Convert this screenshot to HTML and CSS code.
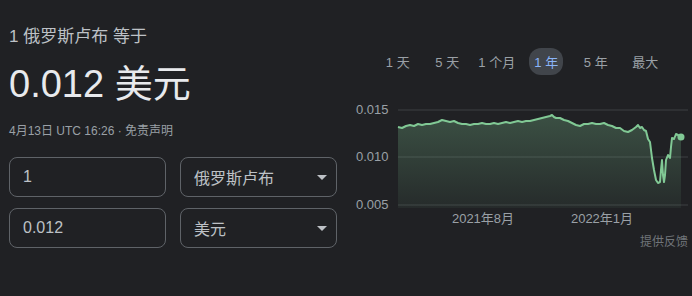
FILE: index.html
```html
<!DOCTYPE html>
<html lang="zh-CN">
<head>
  <meta charset="UTF-8">
  <meta name="viewport" content="width=device-width,initial-scale=1.0">
  <title>货币换算</title>
  <link rel="stylesheet" href="styles.css">
</head>
<body>
  <div class="converter">
    <!-- left: result + inputs -->
    <div class="left">
      <div class="title">1 俄罗斯卢布 等于</div>
      <div class="value">0.012 美元</div>
      <div class="meta">4月13日 UTC 16:26 · 免责声明</div>

      <div class="form">
        <div class="box">1</div>
        <div class="box select">俄罗斯卢布<span class="caret"></span></div>
        <div class="box">0.012</div>
        <div class="box select">美元<span class="caret"></span></div>
      </div>
    </div>

    <!-- right: range tabs + chart -->
    <div class="right">
      <div class="tabs">
        <div class="tab">1 天</div>
        <div class="tab">5 天</div>
        <div class="tab">1 个月</div>
        <div class="tab"><span class="pill">1 年</span></div>
        <div class="tab">5 年</div>
        <div class="tab">最大</div>
      </div>

      <svg class="chart" viewBox="355 95 337 135" width="337" height="135">
        <defs>
          <linearGradient id="fillGrad" x1="0" y1="0" x2="0" y2="1">
            <stop offset="0" stop-color="#81c995" stop-opacity="0.28"/>
            <stop offset="1" stop-color="#81c995" stop-opacity="0.06"/>
          </linearGradient>
        </defs>
        <g class="grid">
          <line x1="398" y1="110" x2="688" y2="110"/>
          <line x1="398" y1="157" x2="688" y2="157"/>
          <line x1="398" y1="205" x2="688" y2="205"/>
        </g>
        <g class="ylabels">
          <text x="356" y="114">0.015</text>
          <text x="356" y="161">0.010</text>
          <text x="356" y="209">0.005</text>
        </g>
        <path id="area" fill="url(#fillGrad)" d=""/>
        <polyline id="line" class="line" points=""/>
        <circle class="dot" cx="681" cy="137" r="3.5"/>
        <g class="xlabels">
          <text x="483" y="223">2021年8月</text>
          <text x="602" y="223">2022年1月</text>
        </g>
      </svg>

      <div class="feedback">提供反馈</div>
    </div>
  </div>

  <script>
    // price series in page coordinates (x, y)
    const pts = [
      398,127, 402,128, 406,126, 410,125, 414,126, 418,124, 422,125, 426,124,
      430,124, 434,123, 438,122, 442,120, 446,121, 450,122, 454,121, 458,123,
      462,124, 466,124, 470,125, 474,124, 478,124, 482,123, 486,124, 490,124,
      494,123, 498,124, 502,123, 506,122, 510,123, 514,122, 518,121, 522,122,
      526,121, 530,121, 534,120, 538,119, 542,118, 546,117, 550,116, 552,115,
      554,117, 556,118, 560,118, 564,120, 568,121, 572,123, 576,125, 580,126,
      584,124, 588,124, 592,123, 596,124, 600,124, 604,123, 608,125, 612,126,
      616,128, 620,128, 624,131, 628,132, 632,130, 636,127, 638,125, 640,128,
      642,127, 644,130, 646,131, 648,139, 650,142, 652,158, 654,170, 656,180,
      658,183, 660,182, 661,170, 662,160, 663,175, 664,182, 665,175, 666,160,
      668,155, 670,158, 671,147, 672,138, 674,139, 676,134, 678,135, 680,137, 681,137
    ];
    const pairs = [];
    for (let i = 0; i < pts.length; i += 2) pairs.push(pts[i] + ',' + pts[i + 1]);
    document.getElementById('line').setAttribute('points', pairs.join(' '));
    document.getElementById('area').setAttribute('d',
      'M398,208 L' + pairs.join(' L') + ' L681,208 Z');
  </script>
</body>
</html>
```

FILE: styles.css
```css
* { margin:0; padding:0; box-sizing:border-box; }
body {
  background:#202124;
  color:#bdc1c6;
  font-family:"Liberation Sans", Arial, "Noto Sans CJK SC", sans-serif;
  width:692px; height:296px; overflow:hidden;
}
.converter {
  display:flex;
  padding-left:9px;
}

/* left column */
.left { width:329px; }
.title {
  margin-top:27px;
  font-size:17px; line-height:20px;
  color:#bdc1c6;
}
.value {
  margin-top:15px;
  font-size:38px; line-height:44px;
  color:#e8eaed;
}
.meta {
  margin-top:17px;
  font-size:12px; line-height:16px;
  color:#9aa0a6;
}
.form {
  margin-top:18px;
  display:grid;
  grid-template-columns:157px 157px;
  column-gap:14px; row-gap:11px;
}
.box {
  height:40px;
  border:1px solid #5f6368; border-radius:8px;
  padding:0 13px;
  display:flex; align-items:center;
  font-size:16px; color:#bdc1c6;
}
.select { justify-content:space-between; padding-right:9px; }
.caret {
  width:0; height:0;
  border-left:5px solid transparent;
  border-right:5px solid transparent;
  border-top:5px solid #bdc1c6;
}

/* right column */
.right {
  margin-left:17px;
  width:337px;
}
.tabs {
  display:flex;
  margin-top:49px;
  padding-left:18px;
  height:24px;
}
.tab {
  width:49.5px;
  display:flex; align-items:center; justify-content:center;
  font-size:13px; color:#9aa0a6;
}
.pill {
  background:#41454b;
  color:#8ab4f8;
  border-radius:12px;
  padding:4px 5px;
}
.chart { display:block; margin-top:22px; }
.grid line { stroke:#3c4043; stroke-width:1; }
.ylabels text, .xlabels text {
  font-family:"Liberation Sans", Arial, "Noto Sans CJK SC", sans-serif;
  font-size:13px; fill:#9aa0a6;
}
.xlabels text { text-anchor:middle; }
.line { fill:none; stroke:#81c995; stroke-width:2; stroke-linejoin:round; }
.dot { fill:#81c995; }
.feedback {
  margin-top:2px;
  text-align:right;
  padding-right:4px;
  font-size:12px; color:#70757a;
}
```
